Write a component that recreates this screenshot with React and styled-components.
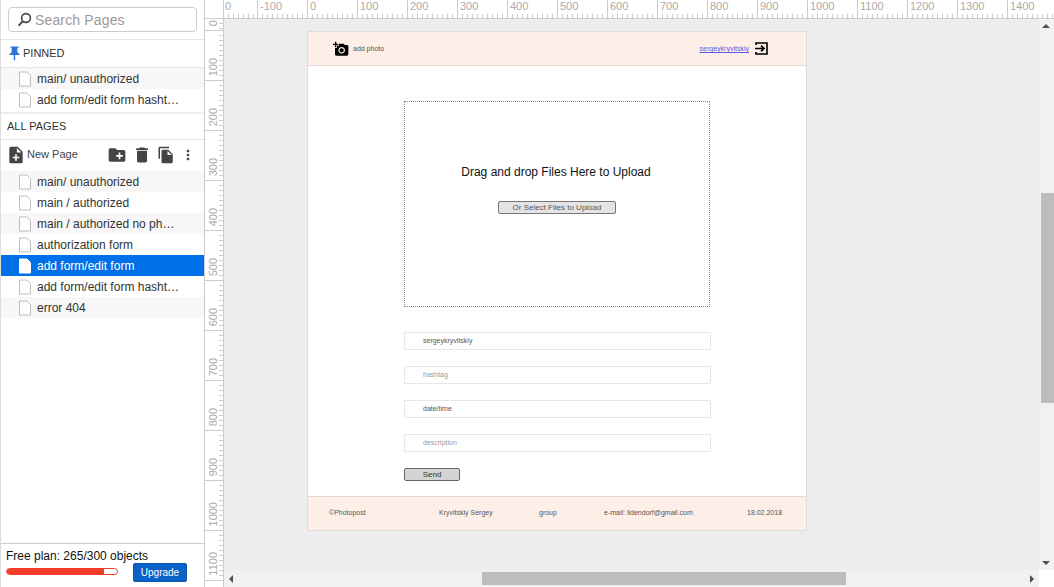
import React from "react";
import styled, { createGlobalStyle } from "styled-components";
import {
  MdPushPin,
  MdNoteAdd,
  MdCreateNewFolder,
  MdDelete,
  MdFileCopy,
  MdMoreVert,
  MdAddAPhoto,
} from "react-icons/md";

const PINNED = ["main/ unauthorized", "add form/edit form hasht…"];
const PAGES = [
  "main/ unauthorized",
  "main / authorized",
  "main / authorized no ph…",
  "authorization form",
  "add form/edit form",
  "add form/edit form hasht…",
  "error 404",
];
const SELECTED = "add form/edit form";
const TOP_LABELS = ["-100", "0"];
for (let i = 100; i <= 1400; i += 100) TOP_LABELS.push(String(i));
const LEFT_LABELS = [];
for (let i = 100; i <= 1100; i += 100) LEFT_LABELS.push(String(i));

const GlobalStyle = createGlobalStyle`
  html, body {
    margin: 0;
    padding: 0;
    height: 100%;
    overflow: hidden;
    background: #fff;
    font-family: "Liberation Sans", Arial, sans-serif;
  }
  #root { height: 100%; }
`;

const Layout = styled.div`
  display: grid;
  grid-template-columns: 204px 1px 1fr;
  width: 1054px;
  height: 587px;
  overflow: hidden;
`;

const Sidebar = styled.aside`
  display: flex;
  flex-direction: column;
  border-left: 1px solid #ddd;
  background: #fff;
  color: #333;
  height: 587px;
  box-sizing: border-box;
`;

const Splitter = styled.div`
  background: #ccc;
`;

const SearchWrap = styled.div`
  height: 40px;
  box-sizing: border-box;
  padding: 7px 7px 0 7px;
  border-bottom: 1px solid #e6e6e6;
`;

const SearchBox = styled.div`
  display: flex;
  align-items: center;
  gap: 3px;
  height: 25px;
  box-sizing: border-box;
  padding-left: 8px;
  border: 1px solid #ccc;
  border-radius: 4px;
  color: #999;
  font-size: 14px;
  letter-spacing: 0.15px;
`;

const SectionHead = styled.div`
  display: flex;
  align-items: center;
  height: ${(p) => p.$h}px;
  box-sizing: border-box;
  padding: 0 0 1px ${(p) => p.$pad}px;
  font-size: 11px;
  color: #333;
  border-bottom: 1px solid #e6e6e6;
`;

const PinIcon = styled(MdPushPin)`
  color: #2a72d8;
  font-size: 17px;
`;

const PageList = styled.div`
  display: flex;
  flex-direction: column;
  padding-bottom: ${(p) => p.$bottom || 0}px;
  border-bottom: ${(p) => (p.$rule ? "2px solid #eee" : "none")};
`;

const PageRow = styled.div`
  display: flex;
  align-items: center;
  gap: 5px;
  height: 21px;
  padding-left: 17px;
  font-size: 12px;
  white-space: nowrap;
  color: ${(p) => (p.$selected ? "#fff" : "#333")};
  background: ${(p) => (p.$selected ? "#0070e8" : p.$odd ? "#f7f7f7" : "#fff")};
`;

const Toolbar = styled.div`
  display: flex;
  align-items: center;
  height: 31px;
  box-sizing: border-box;
  padding: 0 0 1px 5px;
  color: #444;
`;

const NewPage = styled.div`
  display: flex;
  align-items: center;
  gap: 1px;
  width: 101px;
  font-size: 11px;
  color: #444;
`;

const NewPageLabel = styled.span`
  padding-bottom: 2px;
`;

const ToolIcons = styled.div`
  display: flex;
  align-items: center;
  gap: 5px;
  font-size: 20px;
  color: #444;
`;

const Spacer = styled.div`
  flex: 1;
`;

const PlanBox = styled.div`
  height: 44px;
  box-sizing: border-box;
  border-top: 1px solid #ccc;
  padding: 5px 0 0 5px;
  color: #111;
  font-size: 12px;
`;

const PlanRow = styled.div`
  display: flex;
  align-items: flex-start;
  gap: 15px;
`;

const ProgressTrack = styled.div`
  width: 112px;
  height: 7px;
  margin-top: 5px;
  box-sizing: border-box;
  border: 1px solid #f33d2a;
  border-radius: 4px;
  background: #fff;
  overflow: hidden;
`;

const ProgressFill = styled.div`
  height: 100%;
  background: #f33d2a;
`;

const UpgradeButton = styled.button`
  width: 54px;
  height: 19px;
  margin-top: 0;
  padding: 0;
  border: 1px solid #0a55ad;
  border-radius: 2px;
  background: #0a62c9;
  color: #fff;
  font-family: inherit;
  font-size: 10px;
`;

const Workspace = styled.div`
  display: grid;
  grid-template-columns: 19px 1fr;
  grid-template-rows: 19px 1fr;
  min-width: 0;
  height: 587px;
  overflow: hidden;
`;

const Corner = styled.div`
  border-right: 1px solid #ccc;
  border-bottom: 1px solid #ccc;
`;

const TopRuler = styled.div`
  display: flex;
  border-bottom: 1px solid #ccc;
  overflow: hidden;
`;

const TopSegment = styled.div`
  flex: 0 0 ${(p) => p.$w}px;
  box-sizing: border-box;
  height: 18px;
  padding: 0 0 0 ${(p) => p.$pad}px;
  border-left: ${(p) => (p.$first ? "none" : "1px solid #ccc")};
  color: #aaa;
  font-size: 11px;
  line-height: 13px;
  background: repeating-linear-gradient(to right, transparent 0 4px, #ccc 4px 5px) bottom left / 100% 4px no-repeat;
`;

const LeftRuler = styled.div`
  display: flex;
  flex-direction: column;
  border-right: 1px solid #ccc;
  overflow: hidden;
`;

const LeftSegment = styled.div`
  flex: 0 0 ${(p) => p.$h}px;
  box-sizing: border-box;
  display: flex;
  justify-content: flex-end;
  flex-direction: column;
  border-bottom: 1px solid #ccc;
  padding: 0 0 4px 2px;
  color: #aaa;
  font-size: 11px;
  line-height: 12px;
  background: repeating-linear-gradient(to bottom, transparent 0 4px, #ccc 4px 5px) top right / 4px 100% no-repeat;
`;

const RulerText = styled.span`
  writing-mode: vertical-rl;
  transform: rotate(180deg);
  align-self: flex-start;
`;

const CanvasGrid = styled.div`
  display: grid;
  grid-template-columns: 1fr 15px;
  grid-template-rows: 1fr 17px;
  min-width: 0;
  min-height: 0;
`;

const Canvas = styled.main`
  background: #ededed;
  padding: 12px 0 0 83px;
  overflow: hidden;
`;

const Artboard = styled.div`
  display: flex;
  flex-direction: column;
  width: 500px;
  height: 500px;
  box-sizing: border-box;
  background: #fff;
  border: 1px solid #ddd;
  color: #555;
  font-size: 7px;
`;

const Header = styled.header`
  display: flex;
  align-items: center;
  height: 34px;
  flex: none;
  box-sizing: border-box;
  padding: 0 38px 0 25px;
  background: #feeee8;
  border-bottom: 1px solid #e6d9d4;
`;

const AddPhoto = styled.div`
  display: flex;
  align-items: center;
  gap: 4px;
`;

const CameraIcon = styled(MdAddAPhoto)`
  color: #000;
  font-size: 16px;
`;

const UserLink = styled.a`
  display: flex;
  align-items: center;
  gap: 6px;
  margin-left: auto;
  color: #5a5ae6;
`;

const LinkText = styled.span`
  text-decoration: underline;
`;

const Body = styled.div`
  flex: 1;
  display: flex;
  flex-direction: column;
  padding: 35px 0 0 96px;
`;

const DropZone = styled.div`
  display: flex;
  flex-direction: column;
  align-items: center;
  width: 306px;
  height: 206px;
  box-sizing: border-box;
  padding: 63px 0 0 0;
  border: 1px dotted #888;
  color: #111;
  font-size: 12px;
  line-height: 14px;
`;

const DropText = styled.span`
  padding-right: 2px;
`;

const SelectButton = styled.button`
  width: 118px;
  height: 13px;
  margin-top: 22px;
  padding: 0;
  box-sizing: border-box;
  border: 1px solid #777;
  border-radius: 2px;
  background: #e4e4e4;
  color: #555;
  font-family: inherit;
  font-size: 8px;
  line-height: 10px;
`;

const Fields = styled.div`
  display: flex;
  flex-direction: column;
  gap: 16px;
  margin-top: 25px;
`;

const Field = styled.div`
  display: flex;
  align-items: center;
  width: 307px;
  height: 18px;
  box-sizing: border-box;
  padding: 0 0 1px 18px;
  border: 1px solid #e6e6e6;
  border-radius: 1px;
  color: ${(p) => (p.$muted ? "#999" : "#555")};
`;

const SendButton = styled.button`
  width: 56px;
  height: 13px;
  margin-top: 16px;
  padding: 0;
  box-sizing: border-box;
  border: 1px solid #666;
  border-radius: 2px;
  background: #d4d4d4;
  color: #333;
  font-family: inherit;
  font-size: 8px;
  line-height: 10px;
`;

const Footer = styled.footer`
  display: grid;
  grid-template-columns: 110px 100px 65px 143px 1fr;
  align-items: center;
  height: 34px;
  flex: none;
  box-sizing: border-box;
  padding-left: 21px;
  padding-bottom: 3px;
  background: #feeee8;
  border-top: 1px solid #e6d9d4;
`;

const VScroll = styled.div`
  display: flex;
  flex-direction: column;
  background: #f1f1f1;
  position: relative;
`;

const VThumb = styled.div`
  width: 13px;
  height: 210px;
  margin: 174px 0 0 2px;
  background: #bdbdbd;
`;

const HScroll = styled.div`
  display: flex;
  align-items: center;
  background: #f1f1f1;
  position: relative;
`;

const HThumb = styled.div`
  width: 364px;
  height: 13px;
  margin-left: 258px;
  background: #bdbdbd;
`;

const Arrow = styled.span`
  position: absolute;
  width: 0;
  height: 0;
  border-style: solid;
  border-color: transparent;
  ${(p) => p.$dir === "up" && "top: 5px; left: 3px; border-width: 0 4px 4px 4px; border-bottom-color: #505050;"}
  ${(p) => p.$dir === "down" && "bottom: 5px; left: 3px; border-width: 4px 4px 0 4px; border-top-color: #505050;"}
  ${(p) => p.$dir === "left" && "top: 5px; left: 5px; border-width: 4px 4px 4px 0; border-right-color: #505050;"}
  ${(p) => p.$dir === "right" && "top: 5px; right: 5px; border-width: 4px 0 4px 4px; border-left-color: #505050;"}
`;

const ScrollCorner = styled.div`
  background: #fff;
`;

function SearchGlyph() {
  return (
    <svg width="15" height="15" viewBox="0 0 15 15" fill="none" stroke="#444" strokeWidth="1.6">
      <circle cx="9" cy="6" r="4.4" />
      <path d="M5.8 9.4 L1.6 13.6" strokeWidth="2" />
    </svg>
  );
}

function PageGlyph({ filled }) {
  return (
    <svg width="14" height="16" viewBox="0 0 14 16" style={{ flex: "none" }}>
      <path
        d="M1.5 1 H9 L12.5 4.5 V15 H1.5 Z"
        fill="#fff"
        stroke={filled ? "#fff" : "#bdbdbd"}
        strokeWidth="1"
      />
    </svg>
  );
}

function ExitGlyph() {
  return (
    <svg width="13" height="13" viewBox="0 0 13 13" fill="none" stroke="#000" strokeWidth="1.6">
      <path d="M1 3 V1 H12 V12 H1 V10" />
      <path d="M0 6.5 H8.5 M6 3.6 L9 6.5 L6 9.4" strokeWidth="1.7" />
    </svg>
  );
}

function PageLine({ name, odd }) {
  const selected = name === SELECTED;
  return (
    <PageRow $odd={odd} $selected={selected}>
      <PageGlyph filled={selected} />
      {name}
    </PageRow>
  );
}

export default function App() {
  return (
    <>
      <GlobalStyle />
      <Layout>
        <Sidebar>
          <SearchWrap>
            <SearchBox>
              <SearchGlyph />
              Search Pages
            </SearchBox>
          </SearchWrap>
          <SectionHead $h={28} $pad={5}>
            <PinIcon />
            PINNED
          </SectionHead>
          <PageList $bottom={2} $rule>
            {PINNED.map((name, i) => (
              <PageLine key={name} name={name} odd={i % 2 === 0} />
            ))}
          </PageList>
          <SectionHead $h={26} $pad={6}>ALL PAGES</SectionHead>
          <Toolbar>
            <NewPage>
              <MdNoteAdd size={20} />
              <NewPageLabel>New Page</NewPageLabel>
            </NewPage>
            <ToolIcons>
              <MdCreateNewFolder />
              <MdDelete />
              <MdFileCopy size={18} />
              <MdMoreVert size={16} />
            </ToolIcons>
          </Toolbar>
          <PageList>
            {PAGES.map((name, i) => (
              <PageLine key={name} name={name} odd={i % 2 === 0} />
            ))}
          </PageList>
          <Spacer />
          <PlanBox>
            Free plan: 265/300 objects
            <PlanRow>
              <ProgressTrack>
                <ProgressFill style={{ width: `${(265 / 300) * 100}%` }} />
              </ProgressTrack>
              <UpgradeButton>Upgrade</UpgradeButton>
            </PlanRow>
          </PlanBox>
        </Sidebar>
        <Splitter />
        <Workspace>
          <Corner />
          <TopRuler>
            <TopSegment $w={33} $pad={1} $first>0</TopSegment>
            {TOP_LABELS.map((label) => (
              <TopSegment key={label} $w={50} $pad={2}>{label}</TopSegment>
            ))}
          </TopRuler>
          <LeftRuler>
            <LeftSegment $h={12}><RulerText>0</RulerText></LeftSegment>
            {LEFT_LABELS.map((label) => (
              <LeftSegment key={label} $h={50}><RulerText>{label}</RulerText></LeftSegment>
            ))}
          </LeftRuler>
          <CanvasGrid>
            <Canvas>
              <Artboard>
                <Header>
                  <AddPhoto>
                    <CameraIcon />
                    add photo
                  </AddPhoto>
                  <UserLink>
                    <LinkText>sergeykryvitskiy</LinkText>
                    <ExitGlyph />
                  </UserLink>
                </Header>
                <Body>
                  <DropZone>
                    <DropText>Drag and drop Files Here to Upload</DropText>
                    <SelectButton>Or Select Files to Upload</SelectButton>
                  </DropZone>
                  <Fields>
                    <Field>sergeykryvitskiy</Field>
                    <Field $muted>hashtag</Field>
                    <Field>date/time</Field>
                    <Field $muted>description</Field>
                  </Fields>
                  <SendButton>Send</SendButton>
                </Body>
                <Footer>
                  <span>©Photopost</span>
                  <span>Kryvitskiy Sergey</span>
                  <span>group</span>
                  <span>e-mail: lidendorf@gmail.com</span>
                  <span>18.02.2018</span>
                </Footer>
              </Artboard>
            </Canvas>
            <VScroll>
              <Arrow $dir="up" />
              <VThumb />
              <Arrow $dir="down" />
            </VScroll>
            <HScroll>
              <Arrow $dir="left" />
              <HThumb />
              <Arrow $dir="right" />
            </HScroll>
            <ScrollCorner />
          </CanvasGrid>
        </Workspace>
      </Layout>
    </>
  );
}
